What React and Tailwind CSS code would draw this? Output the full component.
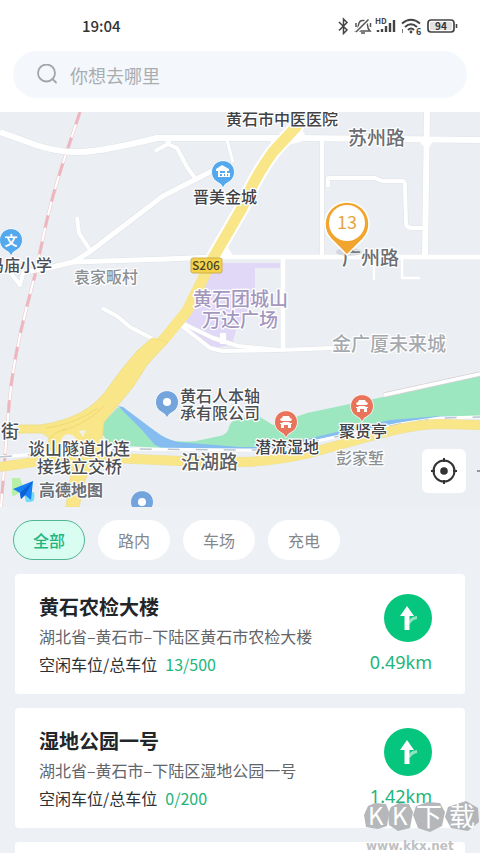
import { clsx } from "clsx";

const filters = ["全部", "路内", "车场", "充电"];

const parkings = [
  {
    name: "黄石农检大楼",
    address: "湖北省–黄石市–下陆区黄石市农检大楼",
    spaces: "13/500",
    distance: "0.49km",
  },
  {
    name: "湿地公园一号",
    address: "湖北省–黄石市–下陆区湿地公园一号",
    spaces: "0/200",
    distance: "1.42km",
  },
];

const roads = [
  { d: "M0 132 L36 145 Q60 153 80 152 Q105 151 157 138 H300 L480 140", w: 6 },
  { d: "M30 271 Q52 268 73 262 L167 259 L213 257 H480", w: 5 },
  { d: "M73 262 Q84 256 92 250 L163 196 L212 171", w: 5 },
  { d: "M155 151 L168 144 L167 138 L170 145 L177 148 L187 167 L195 178", w: 4 },
  { d: "M227 140 L233 162", w: 3 },
  { d: "M77 217 L79 233 L90 250", w: 4 },
  { d: "M10 272 L20 285 L24 270", w: 4 },
  { d: "M322 138 V256", w: 4 },
  { d: "M427 112 L425 256", w: 6 },
  { d: "M328 187 V178 H375 L382 181 H402 Q405 181 405 185 L406 224 Q407 228 412 228 H423", w: 4 },
  { d: "M374 258 V280", w: 3 },
  { d: "M402 258 V278 H420", w: 3 },
  { d: "M283 258 V349", w: 5 },
  { d: "M184 324 L213 338 L238 346 L280 350 L333 348", w: 4 },
  { d: "M182 326 L210 348 L222 351 L280 350", w: 4 },
  { d: "M223 333 V344", w: 6 },
  { d: "M102 308 L117 316 L130 327 L155 340", w: 4 },
];

const labels = [
  { text: "黄石市中医医院", x: 226, y: 125, size: 16, color: "#3f4347" },
  { text: "苏州路", x: 348, y: 145, size: 19, color: "#6b6e72" },
  { text: "晋美金城", x: 193, y: 203, size: 16, color: "#3f4347" },
  { text: "冯庙小学", x: -12, y: 271, size: 16, color: "#4b4f53" },
  { text: "袁家畈村", x: 74, y: 283, size: 16, color: "#8b9095" },
  { text: "黄石团城山", x: 193, y: 306, size: 19, color: "#a397bd" },
  { text: "万达广场", x: 202, y: 327, size: 19, color: "#a397bd" },
  { text: "广州路", x: 342, y: 265, size: 19, color: "#6b6e72" },
  { text: "金广厦未来城", x: 332, y: 351, size: 19, color: "#a6aaae" },
  { text: "黄石人本轴", x: 180, y: 402, size: 16, color: "#4b4f53" },
  { text: "承有限公司", x: 180, y: 419, size: 16, color: "#4b4f53" },
  { text: "聚贤亭", x: 339, y: 437, size: 16, color: "#3f4347" },
  { text: "潜流湿地", x: 255, y: 453, size: 16, color: "#3f4347" },
  { text: "彭家堑", x: 336, y: 464, size: 16, color: "#8b9095" },
  { text: "沿湖路", x: 181, y: 469, size: 19, color: "#5b5e62" },
  { text: "街", x: 1, y: 438, size: 18, color: "#4b4f53" },
  { text: "谈山隧道北连", x: 28, y: 455, size: 17, color: "#4b4f53" },
  { text: "接线立交桥", x: 37, y: 473, size: 17, color: "#4b4f53" },
];

const railway = "M80 112 L70 142 Q54 188 46 224 L35 275 L26 310 Q13 360 9 405 L1 507";
const metro = "M0 457 L60 452 L135 449 L240 450 L275 450 L340 436 L400 424 L440 418 L480 417";
const lakeRoad =
  "M0 467 L33 462 Q60 456 90 457 L180 461 L245 462 Q275 461 310 453 L375 435 Q415 424 440 424 L480 425";

function StatusBar() {
  return (
    <div className="flex items-center justify-between pr-5 pl-[82px] pt-4 text-[#333]">
      <span className="text-[15px] leading-5 font-medium">19:04</span>
      <svg className="h-5 w-[124px] overflow-visible" viewBox="336 16 124 20" fill="none" aria-hidden="true">
        <path d="M339 22 L347 30 L343.500 33.500 V19 L347 22.500 L339 30.500" stroke="#444" strokeWidth="1.500" />
        <path d="M356 31 Q358.500 28.500 358.500 25 Q359 20.500 363 20.500 Q367 20.500 367.500 25 Q367.500 28.500 370 31 Z M361 33 H365" stroke="#555" strokeWidth="1.500" />
        <path d="M368 20 L356 32" stroke="#fff" strokeWidth="4" />
        <path d="M368.500 19.500 L356 32 M356 23 V27 M370.500 23 V27" stroke="#555" strokeWidth="1.500" />
        <text x="375" y="24" fontSize="8" fontWeight="700" fill="#444">HD</text>
        <path d="M378 32 V30 M382 32 V29 M386 32 V26 M390 32 V23 M394 32 V20" stroke="#444" strokeWidth="2.400" />
        <path d="M402 23.500 Q411 16 420 23.500 M405 27 Q411 21.500 417 27 M408 30 Q411 27 414 30" stroke="#444" strokeWidth="2" />
        <circle cx="411" cy="32" r="1.400" fill="#444" />
        <path d="M402.500 29 V33" stroke="#777" strokeWidth="1" />
        <text x="416" y="35" fontSize="9" fontWeight="700" fill="#444" stroke="#fff" strokeWidth="2" paintOrder="stroke">6</text>
        <rect x="428" y="20" width="26" height="12" rx="3" stroke="#444" strokeWidth="1.700" fill="#fff" />
        <rect x="430" y="22" width="22" height="8" rx="1" fill="#e2e2e2" />
        <path d="M456.500 24 V28" stroke="#444" strokeWidth="1.600" />
        <text x="441" y="29.500" fontSize="10" fontWeight="700" fill="#333" textAnchor="middle">94</text>
      </svg>
    </div>
  );
}

function SearchBar() {
  return (
    <label className="mx-[13px] mt-[15px] mb-[14px] flex h-[47px] items-center gap-3 rounded-full bg-[#f4f8fc] px-6">
      <svg className="h-[21px] w-[21px] shrink-0" viewBox="0 0 21 21" fill="none" stroke="#a4a7aa" strokeWidth="1.800" aria-hidden="true">
        <circle cx="9.500" cy="9" r="8.500" />
        <path d="M15.500 15 L19 18.500" strokeLinecap="round" />
      </svg>
      <input
        className="w-full min-w-0 bg-transparent text-lg text-[#333] outline-none placeholder:text-[#a9adb1]"
        type="text"
        placeholder="你想去哪里"
        aria-label="你想去哪里"
      />
    </label>
  );
}

function Pin({ x, y, color, children }) {
  return (
    <g transform={`translate(${x} ${y})`}>
      <path
        d="M-5 10.500 A11.500 11.500 0 1 1 5 10.500 L2 12.500 L0 16 L-2 12.500 Z"
        fill={color}
        stroke="#fff"
        strokeWidth="0.800"
      />
      {children}
    </g>
  );
}

function Pavilion() {
  return (
    <path
      d="M-3 -6 H3 L4 -4 L6 -3 L5 -1 H-5 L-6 -3 L-4 -4 Z M-3 0 H3 L4 1 H6 V2 H5 V6 H2 V3 H-2 V6 H-5 V2 H-6 V1 H-4 Z"
      fill="#fff"
    />
  );
}

function ParkingMap() {
  return (
    <svg className="block h-auto w-full" viewBox="0 112 480 395" fill="none" role="img" aria-label="高德地图">
      <rect y="112" width="480" height="395" fill="#ebeef2" />
      <path d="M208 263 H281 V268 H255 V300 Q242 316 236 330 L232 345 L213 348 L184 326 Z" fill="#e1d7f7" />

      {/* wetland and lake */}
      <path
        d="M118 407 L103 423 V435 L110 445 L160 448 H240 L275 450 L320 437 L400 422 L440 418 L480 417 V376 L383 397 L307 413 L273 425 L260 417 L240 418 Q230 421 229 427 Q228 434 220 436 L196 441 Q172 443 165 438 Z"
        fill="#9de7c0"
      />
      <path
        d="M118 406 L123 407 L155 431 Q165 439 178 442 L240 447 H272 L320 436 L345 430 L390 420 L440 416 L480 416 V418 L440 419 L395 424 L320 439 L272 450 H166 L155 445 L142 430 Z"
        fill="#86bdf1"
      />
      <path d="M384 395 L480 374" stroke="#d9cfd6" strokeWidth="5" />
      <path d="M384 395 L480 374" stroke="#fff" strokeWidth="3.500" />

      {/* railway */}
      <path d={railway} stroke="#ecc7cc" strokeWidth="3.200" />
      <path d={railway} stroke="#fff" strokeWidth="2.200" />
      <path d={railway} stroke="#edb6be" strokeWidth="2.800" strokeDasharray="13 14" />

      {/* streets */}
      {roads.map((road) => (
        <path key={road.d} d={road.d} stroke="#dfe2e6" strokeWidth={road.w + 1} strokeLinejoin="round" />
      ))}
      {roads.map((road) => (
        <path key={road.d} d={road.d} stroke="#fff" strokeWidth={road.w} strokeLinejoin="round" />
      ))}
      <path
        d="M268 137 H284 L276 151 Z M300 126 L308 140 L288 145 L280 152 Z M202 259 L216 248 L222 258 Z M226 244 L233 256 L220 258 Z M418 140 H434 L427 150 Z"
        fill="#fff"
      />
      <path d="M304 112 L296 127 L273 152 Q254 178 242 208 L213 258" stroke="#fff" strokeWidth="15" />

      {/* highways */}
      <path d={metro} stroke="#fff" strokeWidth="3" />
      <path d={metro} stroke="#b9c4ce" strokeWidth="1.500" strokeDasharray="12 16" />
      <path d={lakeRoad} stroke="#eee0a0" strokeWidth="10" />
      <path d={lakeRoad} stroke="#f8e688" strokeWidth="9" />
      <path d="M304 112 L296 127 L273 152 Q254 178 242 208 L213 258 L187 311 L165 338 L150 353" stroke="#f8e688" strokeWidth="11" />
      <path
        d="M18 425 H40 Q62 422 80 413 Q98 403 108 388 L122 369 L137 351 L152 338 L168 342 L147 365 L133 387 L118 405 L104 422 L102 438 L106 457 L92 466 L85 480 L79 507 H66 L70 480 L72 466 L58 458 Q46 449 49 438 L42 433 H18 Z"
        fill="#f8e688"
        stroke="#eedc86"
        strokeWidth="0.800"
      />
      <path d="M79 431 L86 430 L83 437 Z M60 443 Q62 434 69 434 Q76 435 78 443 L70 447 Z" fill="#eef0ee" />
      <path d="M46 428 Q76 424 98 408 M62 431 Q86 424 104 406 M50 438 Q56 431 66 429" stroke="#ecd568" strokeWidth="0.800" />

      <rect x="191" y="258" width="31" height="15" rx="2" fill="#f5d24c" stroke="#cbb24b" />
      <text x="206" y="270" fontSize="12" fontWeight="500" fill="#4c4527" textAnchor="middle">S206</text>

      <g fontWeight="500" stroke="#fff" strokeWidth="2.500" strokeLinejoin="round" paintOrder="stroke">
        {labels.map((label) => (
          <text key={label.text} x={label.x} y={label.y} fontSize={label.size} fill={label.color}>
            {label.text}
          </text>
        ))}
      </g>

      <Pin x={223} y={172} color="#53a8ee">
        <path d="M-1 -7 L6 -3 V-1 H4 V1 H7 V5 H-5 V-1 H-7 V-3 Z" fill="#fff" />
        <path d="M-3 -1 H2 V1 H-3 Z M-3 2 H-1 V4 H-3 Z M1 2 H2 V4 H1 Z M4 2 H5 V4 H4 Z" fill="#53a8ee" />
      </Pin>
      <Pin x={11} y={240} color="#53a8ee">
        <text y="5" fontSize="13" fontWeight="700" fill="#fff" textAnchor="middle">文</text>
      </Pin>
      <Pin x={167} y={402} color="#74a4dc">
        <circle r="4" fill="#fff" />
      </Pin>
      <Pin x={142} y={502} color="#74a4dc">
        <circle r="4" fill="#fff" />
      </Pin>
      <Pin x={286} y={422} color="#e9745c">
        <Pavilion />
      </Pin>
      <Pin x={362} y={406} color="#e9745c">
        <Pavilion />
      </Pin>

      <ellipse cx="349" cy="252" rx="13" ry="4" fill="#9aa3ab" opacity="0.300" />
      <path
        d="M347 255 L331 239 A22 22 0 1 1 363 239 Z"
        fill="#f1a42e"
        stroke="#fff"
        strokeWidth="1.500"
      />
      <circle cx="347" cy="223" r="18" fill="#fff" />
      <text x="347" y="229" fontSize="18" fill="#e5a544" textAnchor="middle">13</text>

      {/* map provider logo */}
      <path d="M12 478 H20 L24 490 L14 496 Q11 496 12 490 Z" fill="#b8efa9" />
      <path d="M24 494 L34 492 Q36 502 30 502 H26 Z" fill="#74dcf4" />
      <path d="M13 489 L33 481 L31 500 L25 495 L21 499 L20 493 Z" fill="#1581f5" />
      <path d="M33 481 L20 493 L21 499 L25 495 Z" fill="#0d5fd6" />
      <text x="39" y="496" fontSize="16" fontWeight="700" fill="#6b6f75" stroke="#fff" strokeWidth="2" paintOrder="stroke">高德地图</text>
      <path d="M477 471 H480" stroke="#777" strokeWidth="1.500" />
    </svg>
  );
}

function LocateButton() {
  return (
    <button
      className="absolute right-[14px] bottom-[14px] flex h-11 w-11 items-center justify-center rounded-md bg-white"
      type="button"
      aria-label="定位"
    >
      <svg className="h-7 w-7" viewBox="0 0 28 28" fill="none" stroke="#333" strokeWidth="2" aria-hidden="true">
        <circle cx="14" cy="14" r="10.500" />
        <circle cx="14" cy="14" r="3.800" fill="#333" stroke="none" />
        <path d="M14 1 V5 M14 23 V27 M1 14 H5 M23 14 H27" />
      </svg>
    </button>
  );
}

function ParkingCard({ parking }) {
  return (
    <article className="flex justify-between rounded bg-white pt-5 pr-[33px] pb-4 pl-6">
      <div className="flex flex-col">
        <h2 className="text-xl leading-[26px] font-bold text-[#22262a]">{parking.name}</h2>
        <p className="mt-0.5 text-base leading-7 text-[#626569]">{parking.address}</p>
        <p className="text-base leading-7 text-[#2e3134]">
          空闲车位/总车位
          <span className="ml-2 text-[#22b57c]">{parking.spaces}</span>
        </p>
      </div>
      <div className="flex flex-col items-end gap-1.5">
        <button
          className="flex h-12 w-12 items-center justify-center rounded-full bg-[#06c57c]"
          type="button"
          aria-label="导航"
        >
          <svg className="h-7 w-7" viewBox="0 0 28 28" aria-hidden="true">
            <path d="M15 18 Q15 13 23 12 V15 Q18 16 16 20 Z" fill="#8fe4c2" />
            <path d="M13 2 L20 12 H15.500 V26 H10.500 V12 H6 Z" fill="#fff" />
          </svg>
        </button>
        <span className="font-['Noto_Sans'] text-lg leading-7 text-[#22b57c]">{parking.distance}</span>
      </div>
    </article>
  );
}

function Watermark() {
  return (
    <svg className="pointer-events-none absolute right-0 bottom-0 h-[54px] w-[118px]" viewBox="362 799 118 54" aria-hidden="true">
      <g fill="#a9abae" opacity="0.850">
        <path d="M368 806 L375 803 L386 804 L389 812 L387 826 L378 829 L366 827 L364 815 Z" />
        <path d="M391 807 L399 803 L409 804 L413 812 L410 828 L398 831 L389 825 L388 814 Z" />
        <path d="M416 806 L428 802 L440 803 L445 812 L442 826 L430 832 L418 828 L413 815 Z" />
        <path d="M448 807 L466 801 L478 808 L479 822 L468 831 L451 828 L445 817 Z" />
      </g>
      <g fill="#fff">
        <text x="368" y="825" fontSize="24">K</text>
        <text x="392" y="825" fontSize="24">K</text>
        <text x="416" y="826" fontSize="26">下</text>
        <text x="449" y="826" fontSize="26">载</text>
      </g>
      <text x="366" y="850" fontSize="12" fontWeight="700" fill="#bfc1c4" fontFamily="DejaVu Sans">www.kkx.net</text>
    </svg>
  );
}

function App() {
  return (
    <div className="relative flex h-screen flex-col overflow-hidden bg-[#edf1f6] font-['Noto_Sans_CJK_SC',sans-serif]">
      <header className="bg-white">
        <StatusBar />
        <SearchBar />
      </header>

      <section className="relative shrink-0">
        <ParkingMap />
        <LocateButton />
      </section>

      <nav className="flex shrink-0 gap-[13px] px-[13px] pt-[13px]">
        {filters.map((item, index) => (
          <button
            key={item}
            type="button"
            className={clsx(
              "h-10 w-[72px] rounded-full border text-base",
              index === 0
                ? "border-[#4fb592] bg-[#d9fdf0] font-medium text-[#22b57c]"
                : "border-white bg-white text-[#85888b]"
            )}
          >
            {item}
          </button>
        ))}
      </nav>

      <main className="flex flex-col gap-[14px] px-[15px] pt-[14px]">
        {parkings.map((parking) => (
          <ParkingCard key={parking.name} parking={parking} />
        ))}
        <div className="h-[120px] shrink-0 rounded bg-white" />
      </main>

      <Watermark />
    </div>
  );
}

export default App;
